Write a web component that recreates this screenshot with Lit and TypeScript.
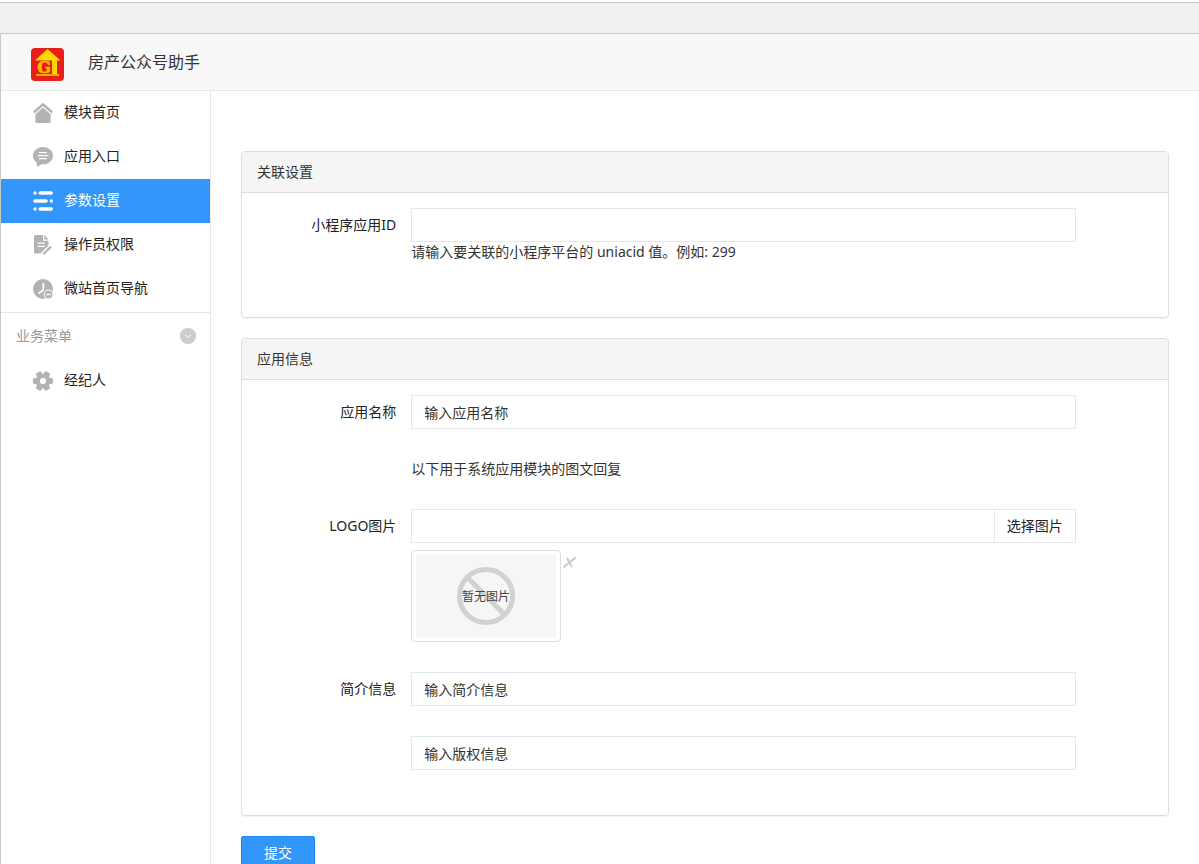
import { LitElement, html, svg, css } from "lit";
import { customElement, property } from "lit/decorators.js";

const icons: Record<string, unknown> = {
  home: svg`<path d="M10 0Q9.500 0 9 .4L0 8.600l1.500 1.800L10 2.900l8.500 7.500L20 8.600 11 .4Q10.500 0 10 0z"/><path d="M10 4.600 2.400 11.200V18.700q0 1.300 1.300 1.300h12.600q1.300 0 1.300-1.300v-7.500z"/>`,
  chat: svg`<path d="M10 0C4.400 0 0 3.800 0 8.700c0 2.900 1.500 5.500 4 7V20l4.300-2.800 1.700.1c5.600 0 10-3.800 10-8.600S15.600 0 10 0z"/><path d="M6.500 5.700h7M5.200 8.700h9.600M6.500 11.700h7" stroke="#fff" stroke-width="1.300" stroke-linecap="round"/>`,
  list: svg`<g stroke="currentColor" stroke-width="3.600" stroke-linecap="round"><path d="M7.300 2H18.200M2 10h11M7.300 18H18.200"/></g><circle cx="2" cy="2" r="1.700"/><circle cx="18.300" cy="10" r="1.700"/><circle cx="2" cy="18" r="1.700"/>`,
  doc: svg`<path d="M2.500 0H10v5.700h5.500v4.600L7.500 18.500H2.500Q1 18.500 1 17V1.500Q1 0 2.500 0zM11.300 0l4.200 4.400h-4.200z"/><path d="M4.500 8.200h7.500M4.500 11.400h7.500" stroke="#fff" stroke-width="1.300"/><path d="m10.300 19.300 7.700-7.700" stroke="currentColor" stroke-width="2.200"/>`,
  clock: svg`<circle cx="10" cy="10" r="10"/><path d="M10.300 4v6.800L5.500 14.500" fill="none" stroke="#fff" stroke-width="1.700"/><circle cx="15.500" cy="15.500" r="4.900" fill="#fff"/><circle cx="15.500" cy="15.500" r="3.900"/><path d="M13.300 15.500h4.400" stroke="#fff" stroke-width="1.500"/>`,
  gear: svg`<g stroke="currentColor" stroke-width="3.500" stroke-linejoin="round"><path d="M1.700 8.700h16.600v2.600H1.700z"/><path d="M1.700 8.700h16.600v2.600H1.700z" transform="rotate(60 10 10)"/><path d="M1.700 8.700h16.600v2.600H1.700z" transform="rotate(120 10 10)"/></g><circle cx="10" cy="10" r="7.300"/><circle cx="10" cy="10" r="3.100" fill="#fff"/>`,
};

@customElement("side-item")
class SideItem extends LitElement {
  @property() icon = "";
  @property() label = "";
  @property({ type: Boolean }) active = false;

  static styles = css`
    :host { display: block; }
    .link {
      display: flex;
      align-items: center;
      gap: 11px;
      height: 44px;
      padding-left: 32px;
      color: #222;
      text-decoration: none;
    }
    .active { background: #3296fa; color: #fff; }
    .icon { width: 20px; height: 20px; color: #b3b3b3; fill: currentColor; overflow: visible; }
    .active .icon { color: #fff; }
    .text { line-height: 20px; padding-bottom: 2px; }
  `;

  render() {
    return html`<a class="link ${this.active ? "active" : ""}" href="#">
      <svg class="icon" viewBox="0 0 20 20" aria-hidden="true">${icons[this.icon]}</svg>
      <span class="text">${this.label}</span>
    </a>`;
  }
}

@customElement("app-root")
class AppRoot extends LitElement {
  static styles = css`
    :host {
      display: flex;
      flex-direction: column;
      height: 100vh;
      overflow: hidden;
      background: #fff;
      color: #333;
      font: 14px/20px "Noto Sans", "Noto Sans CJK SC", sans-serif;
    }
    * { box-sizing: border-box; }
    .strip {
      flex: none;
      height: 32px;
      margin-top: 2px;
      border-top: 1px solid #c8c8c8;
      border-bottom: 1px solid #c8c8c8;
      background: #f1f1f1;
    }
    .frame {
      flex: 1;
      min-height: 0;
      display: flex;
      flex-direction: column;
      border-left: 1px solid #c8c8c8;
    }
    .top {
      flex: none;
      display: flex;
      align-items: center;
      gap: 24px;
      height: 57px;
      padding: 4px 30px 0;
      background: #f8f8f8;
      border-bottom: 1px solid #e7e7e7;
    }
    .logo { width: 33px; height: 33px; }
    .letter { font: 700 16px "DejaVu Serif", serif; }
    .title { margin: 0; padding-bottom: 4px; font-size: 16px; line-height: 24px; font-weight: 400; }
    .columns { flex: 1; min-height: 0; display: flex; }
    .side { flex: none; width: 210px; border-right: 1px solid #e7e7e7; }
    .section {
      display: flex;
      align-items: center;
      justify-content: space-between;
      height: 47px;
      padding: 0 14px 0 15px;
      border-top: 1px solid #e7e7e7;
      color: #999;
      margin-top: 1px;
    }
    .toggle { padding: 0; border: 0; background: none; display: flex; }
    .chevron { width: 16px; height: 16px; }
    .main { flex: 1; min-width: 0; padding: 60px 30px 30px; overflow-y: auto; scrollbar-width: none; }
    .panel {
      margin-bottom: 20px;
      border: 1px solid #ddd;
      border-radius: 4px;
      box-shadow: 0 1px 1px rgba(0, 0, 0, 0.05);
    }
    .heading {
      margin: 0;
      padding: 10px 15px;
      background: #f5f5f5;
      border-bottom: 1px solid #ddd;
      border-radius: 3px 3px 0 0;
      font-size: 14px;
      line-height: 20px;
      font-weight: 400;
    }
    .body { padding: 15px 0; }
    .row { display: grid; grid-template-columns: 2fr 9fr 1fr; margin-bottom: 30px; }
    .label { padding-top: 7px; text-align: right; color: #222; }
    .field { grid-column: 2; min-width: 0; padding: 0 15px; }
    .input {
      display: block;
      width: 100%;
      height: 34px;
      padding: 6px 12px;
      border: 1px solid #e7e7e7;
      border-radius: 0;
      background: #fff;
      color: #333;
      font: inherit;
    }
    .help { margin: 0; }
    .spaced { margin-bottom: 10px; }
    .group { display: flex; }
    .pick {
      flex: none;
      height: 34px;
      padding: 0 12px;
      border: 1px solid #e7e7e7;
      border-left: 0;
      background: #fff;
      color: #222;
      font: inherit;
    }
    .preview { display: flex; align-items: flex-start; gap: 2px; margin-top: 7px; }
    .thumb {
      width: 150px;
      height: 92px;
      padding: 4px;
      border: 1px solid #ddd;
      border-radius: 4px;
    }
    .picture { display: block; width: 100%; height: 100%; background: #f6f6f6; }
    .caption { font: 12px "Noto Sans CJK SC", sans-serif; }
    .remove { display: flex; margin-top: 7px; padding: 0; border: 0; background: none; }
    .cross { width: 13px; height: 11px; }
    .submit {
      display: block;
      height: 34px;
      padding: 0 22px;
      border: 1px solid #1989fa;
      border-radius: 2px;
      background: #3296fa;
      color: #fff;
      font: inherit;
    }
  `;

  render() {
    return html`
      <div class="strip"></div>
      <div class="frame">
        <header class="top">
          <svg class="logo" viewBox="0 0 33 33" aria-hidden="true">
            <rect width="33" height="33" rx="4" fill="#e81e1a" />
            <path d="M16.500 1 29.500 12.500H26V26h2v2H5v-2h16V12.500H4z" fill="#ffd800" />
            <path d="M5 26h23v2H5z" fill="#f7a900" />
            <text class="letter" x="13" y="25" text-anchor="middle" fill="#f9b800" stroke="#f9b800" stroke-width=".6">G</text>
          </svg>
          <h1 class="title">房产公众号助手</h1>
        </header>
        <div class="columns">
          <nav class="side">
            <side-item icon="home" label="模块首页"></side-item>
            <side-item icon="chat" label="应用入口"></side-item>
            <side-item icon="list" label="参数设置" active></side-item>
            <side-item icon="doc" label="操作员权限"></side-item>
            <side-item icon="clock" label="微站首页导航"></side-item>
            <div class="section">
              <span>业务菜单</span>
              <button class="toggle" type="button" aria-label="业务菜单">
                <svg class="chevron" viewBox="0 0 16 16">
                  <circle cx="8" cy="8" r="8" fill="#ccc" />
                  <path d="m5 7 3 2.500L11 7" fill="none" stroke="#fff" stroke-width="1" />
                </svg>
              </button>
            </div>
            <side-item icon="gear" label="经纪人"></side-item>
          </nav>
          <main class="main">
            <form>
              <section class="panel">
                <h2 class="heading">关联设置</h2>
                <div class="body">
                  <div class="row">
                    <label class="label" for="appid">小程序应用ID</label>
                    <div class="field">
                      <input class="input" id="appid" type="text" />
                      <p class="help spaced">请输入要关联的小程序平台的 uniacid 值。例如: 299</p>
                    </div>
                  </div>
                </div>
              </section>
              <section class="panel">
                <h2 class="heading">应用信息</h2>
                <div class="body">
                  <div class="row">
                    <label class="label" for="name">应用名称</label>
                    <div class="field"><input class="input" id="name" type="text" value="输入应用名称" /></div>
                  </div>
                  <div class="row">
                    <div class="field"><p class="help">以下用于系统应用模块的图文回复</p></div>
                  </div>
                  <div class="row">
                    <label class="label" for="logo">LOGO图片</label>
                    <div class="field">
                      <div class="group">
                        <input class="input" id="logo" type="text" />
                        <button class="pick" type="button">选择图片</button>
                      </div>
                      <div class="preview">
                        <div class="thumb">
                          <svg class="picture" viewBox="0 0 140 82">
                            <g fill="none" stroke="#d2d2d2" stroke-width="5">
                              <circle cx="70" cy="41" r="26.500" />
                              <path d="m51.500 22.500 37 37" />
                            </g>
                            <text class="caption" x="70" y="46" text-anchor="middle" fill="#444">暂无图片</text>
                          </svg>
                        </div>
                        <button class="remove" type="button" aria-label="删除">
                          <svg class="cross" viewBox="0 0 13 11">
                            <path d="M.5 10.500 12.500.5M4 1l5 9" fill="none" stroke="#ccc" stroke-width="2" />
                          </svg>
                        </button>
                      </div>
                    </div>
                  </div>
                  <div class="row">
                    <label class="label" for="intro">简介信息</label>
                    <div class="field"><input class="input" id="intro" type="text" value="输入简介信息" /></div>
                  </div>
                  <div class="row">
                    <div class="field">
                      <input class="input" type="text" aria-label="版权信息" value="输入版权信息" />
                    </div>
                  </div>
                </div>
              </section>
              <button class="submit" type="submit">提交</button>
            </form>
          </main>
        </div>
      </div>
    `;
  }
}
